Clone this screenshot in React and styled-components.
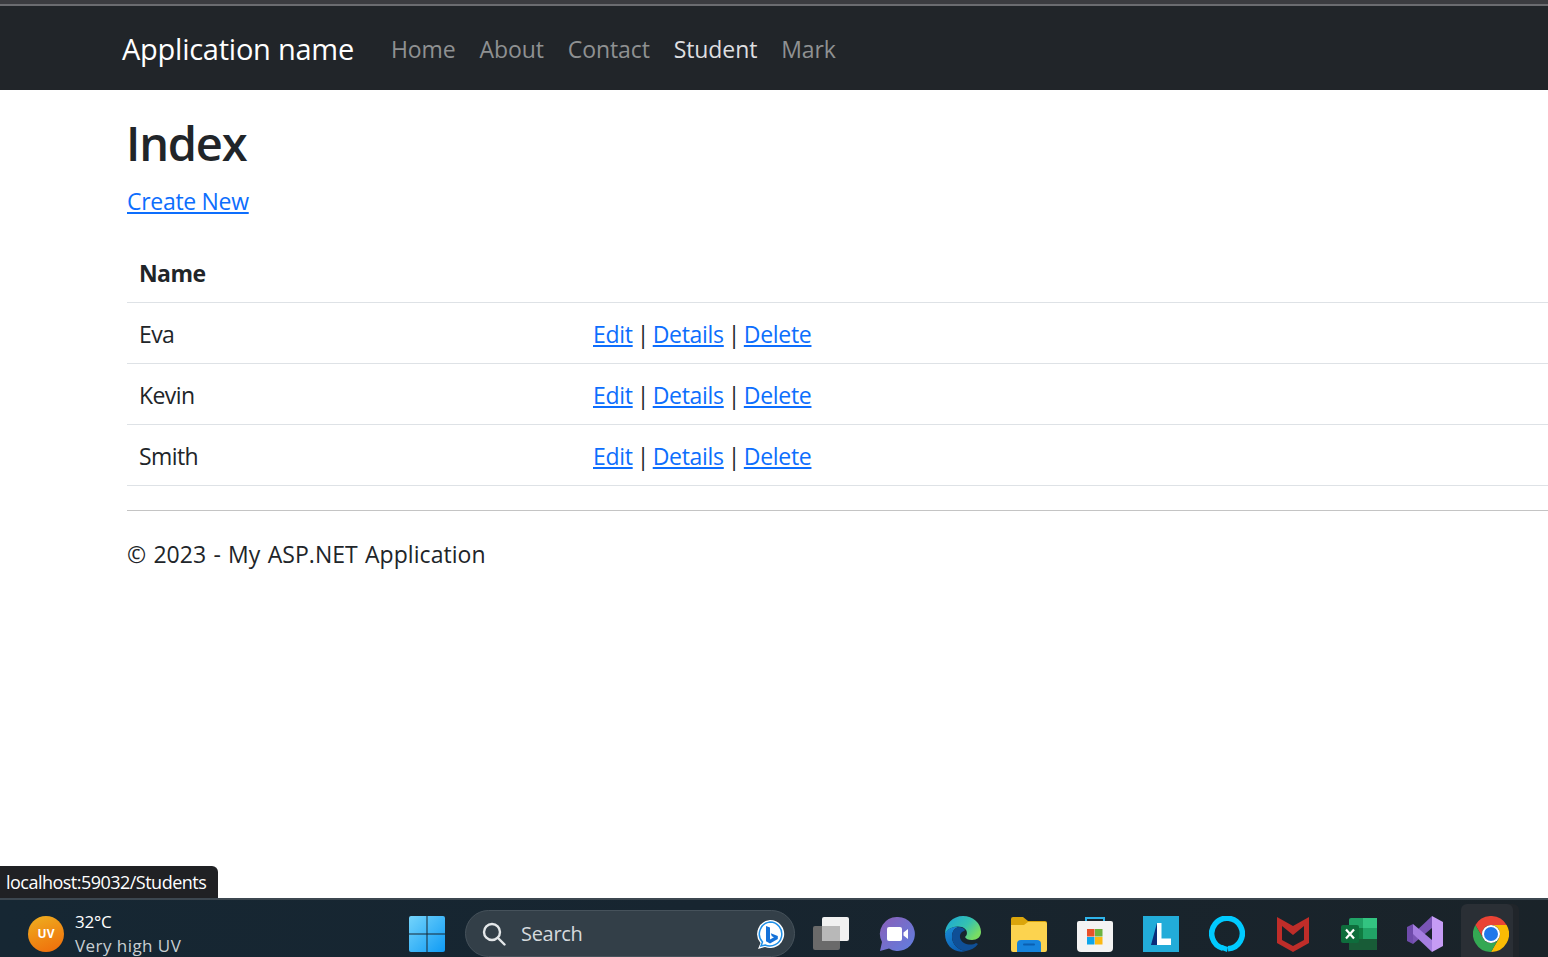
import React from 'react'
import styled, { createGlobalStyle } from 'styled-components'

const GlobalStyle = createGlobalStyle`
  html, body { margin: 0; padding: 0; background: #fff; }
  body { font-family: "Open Sans", "Liberation Sans", sans-serif; color: #212529; }
`

const Page = styled.div`
  position: relative;
  width: 1548px;
  height: 957px;
  overflow: hidden;
  display: flex;
  flex-direction: column;
`

const BrowserEdge = styled.div`
  height: 4px;
  background: #3b3c40;
  border-bottom: 2px solid #6b6c70;
`

const Navbar = styled.nav`
  height: 84px;
  box-sizing: border-box;
  padding: 1px 0 0 122px;
  background: #212529;
  display: flex;
  align-items: center;
`

const Brand = styled.a`
  font-size: 29px;
  letter-spacing: -0.25px;
  color: #fff;
  margin-right: 37px;
`

const NavLinks = styled.div`
  display: flex;
  gap: 24px;
`

const NavLink = styled.a`
  font-size: 23px;
  letter-spacing: -0.1px;
  color: ${props => props.$active ? '#dedfe0' : '#8f9192'};
`

const Main = styled.main`
  flex: 1;
  padding-left: 127px;
`

const Title = styled.h1`
  margin: 21px 0 0 -1px;
  font-size: 47px;
  line-height: 64px;
  font-weight: 600;
  letter-spacing: -1.2px;
`

const TextLink = styled.a`
  font-size: 23px;
  letter-spacing: -0.3px;
  color: #0d6efd;
  text-decoration: underline;
`

const CreateRow = styled.p`
  margin: 8px 0 0;
  line-height: 36px;
  letter-spacing: -0.2px;
`

const Table = styled.div`
  margin-top: 20px;
  width: 1500px;
`

const Row = styled.div`
  display: grid;
  grid-template-columns: 454px 1fr;
  height: 61px;
  box-sizing: border-box;
  padding: 2px 0 0 12px;
  border-bottom: 1px solid #dee2e6;
  align-items: center;
  font-size: 23px;
  letter-spacing: -0.6px;
`

const NameHead = styled.span`
  font-weight: 700;
`

const Actions = styled.span`
  display: flex;
  gap: 4px;
`

const Rule = styled.hr`
  margin: 24px 0 0;
  width: 1500px;
  border: 0;
  border-top: 1px solid #c4c4c4;
`

const Footer = styled.p`
  margin: 25px 0 0;
  font-size: 23px;
  line-height: 36px;
  letter-spacing: 0.05px;
  word-spacing: 1.2px;
`

const StatusBubble = styled.div`
  position: absolute;
  left: 0;
  bottom: 59px;
  width: 218px;
  height: 32px;
  box-sizing: border-box;
  padding-left: 6px;
  background: #202124;
  border-top-right-radius: 6px;
  color: #fff;
  font-size: 18px;
  letter-spacing: -0.52px;
  line-height: 33px;
`

const Taskbar = styled.footer`
  height: 59px;
  box-sizing: border-box;
  padding-top: 10px;
  border-top: 2px solid #3c4750;
  background: linear-gradient(90deg, #162733 0%, #172530 45%, #1a2329 100%);
  display: flex;
  align-items: center;
`

const Weather = styled.div`
  width: 394px;
  flex: none;
  display: flex;
  align-items: center;
  padding-left: 28px;
  box-sizing: border-box;
  gap: 11px;
`

const UvBadge = styled.div`
  width: 36px;
  height: 36px;
  border-radius: 50%;
  background: linear-gradient(160deg, #eeb020, #f06a0a);
  color: #fff;
  font: 700 12px "Open Sans", sans-serif;
  display: flex;
  align-items: center;
  justify-content: center;
`

const WeatherText = styled.div`
  font-size: 17px;
  letter-spacing: -0.2px;
  line-height: 24px;
  color: #fff;
`

const WeatherSub = styled.div`
  color: #c9cfd3;
  letter-spacing: 0.45px;
`

const IconCell = styled.div`
  width: 66px;
  height: 36px;
  flex: none;
  display: flex;
  justify-content: center;
  align-items: center;
`

const ActiveCell = styled(IconCell)`
  position: relative;
  &::before {
    content: '';
    position: absolute;
    top: -12px;
    left: 3px;
    width: 52px;
    height: 60px;
    border-radius: 6px 6px 0 0;
    background: #2a2f35;
    box-shadow: 6px 0 0 #20252a;
  }
  & > svg { position: relative; }
`

const SearchBox = styled.div`
  width: 330px;
  height: 47px;
  margin: 0 3px 0 5px;
  flex: none;
  box-sizing: border-box;
  border: 1px solid #46525b;
  border-radius: 24px;
  background: #333f48;
  display: flex;
  align-items: center;
  padding: 0 8px 0 16px;
  gap: 15px;
  color: #d6dadd;
  font-size: 20px;
  letter-spacing: -0.3px;
`

const SearchLabel = styled.span`
  flex: 1;
`

const Icon = ({ children, size = 36 }) => (
  <svg width={size} height={size} viewBox="0 0 36 36">{children}</svg>
)

const WindowsIcon = () => (
  <Icon>
    <defs>
      <linearGradient id="win" x1="0" y1="0" x2="1" y2="1">
        <stop offset="0" stopColor="#74d4fb" />
        <stop offset="1" stopColor="#0f9bf5" />
      </linearGradient>
    </defs>
    <path fill="url(#win)" d="M2 0h15.500v17.500H0V2a2 2 0 0 1 2-2zM18.500 0H34a2 2 0 0 1 2 2v15.500H18.500zM0 18.500h17.500V36H2a2 2 0 0 1-2-2zM18.500 18.500H36V34a2 2 0 0 1-2 2H18.500z" />
  </Icon>
)

const SearchGlass = () => (
  <svg width="24" height="24" viewBox="0 0 24 24" fill="none" stroke="#e4e7e9" strokeWidth="2.400">
    <circle cx="10" cy="10" r="8" />
    <path d="M16 16l6.500 6.500" strokeLinecap="round" />
  </svg>
)

const BingIcon = () => (
  <svg width="32" height="32" viewBox="0 0 32 32">
    <path fill="#fff" d="M16 2a14 14 0 1 1-5 27l-7 2 2.500-6A14 14 0 0 1 16 2z" />
    <path fill="none" stroke="#1d8fe8" strokeWidth="1.500" d="M16 4a12 12 0 1 1-5 23l-4 1 1.500-4A12 12 0 0 1 16 4z" />
    <path fill="#1572d9" d="M12 8l4 1.500v12l4-2.200-2.200-1-1-3 7 2.700v3l-7.800 4.500-4-2.200z" />
  </svg>
)

const TaskViewIcon = () => (
  <Icon>
    <rect x="0" y="10" width="27" height="24" rx="2" fill="#6a6a6a" />
    <rect x="9" y="1" width="27" height="24" rx="2" fill="#f1f1f1" />
    <rect x="9" y="10" width="18" height="15" fill="#b8b8b8" />
  </Icon>
)

const MeetIcon = () => (
  <Icon>
    <defs>
      <linearGradient id="meet" x1="0" y1="0" x2="1" y2="1">
        <stop offset="0" stopColor="#8a5fb8" />
        <stop offset="1" stopColor="#5f7fe0" />
      </linearGradient>
    </defs>
    <path fill="url(#meet)" d="M19 1a17 17 0 1 1-9 31.500L1 35l2-9A17 17 0 0 1 19 1z" />
    <rect x="8" y="11" width="15" height="14" rx="2" fill="#fff" />
    <path fill="#fff" d="M24.500 16.500l4.500-3.500v10l-4.500-3.500z" />
  </Icon>
)

const EdgeIcon = () => (
  <Icon>
    <defs>
      <linearGradient id="edgeTop" x1="0" y1="0" x2="1" y2="0.6">
        <stop offset="0" stopColor="#1aa5d8" />
        <stop offset="0.6" stopColor="#35c2b0" />
        <stop offset="1" stopColor="#79dc62" />
      </linearGradient>
      <linearGradient id="edgeLow" x1="0" y1="0" x2="0.6" y2="1">
        <stop offset="0" stopColor="#1a8ed8" />
        <stop offset="1" stopColor="#0c5cb0" />
      </linearGradient>
    </defs>
    <path fill="url(#edgeTop)" d="M18 0c10 0 18 7 18 16 0 5-4 8-9 8-4 0-6-1-7-3 3-2 3-8-3-10C10 9 3 12 0 18 0 8 8 0 18 0z" />
    <path fill="url(#edgeLow)" d="M0 18c2-5 8-8 14-7-5 1-7 5-7 10 0 7 6 13 14 14C10 38 0 30 0 18z" />
    <path fill="#0f4f96" d="M14 11c-5 1-7 5-7 10 0 7 6 13 14 14 5-1 9-3 12-7l-2-1c-3 2-8 2-12 0-5-3-5-9-2-11 1-1 3-1 3-2-1-2-4-3-6-3z" />
  </Icon>
)

const FolderIcon = () => (
  <Icon>
    <path fill="#dba50b" d="M0 3a2 2 0 0 1 2-2h10l5 4h17a2 2 0 0 1 2 2v4H0z" />
    <path fill="#fcd34f" d="M0 9h13l4-3h17a2 2 0 0 1 2 2v26a2 2 0 0 1-2 2H2a2 2 0 0 1-2-2z" />
    <path fill="#1683dc" d="M6 36v-8a4 4 0 0 1 4-4h16a4 4 0 0 1 4 4v8z" />
    <rect x="12" y="27.500" width="12" height="2" rx="1" fill="#0a5fb0" />
  </Icon>
)

const StoreIcon = () => (
  <Icon>
    <path fill="none" stroke="#2fb4ea" strokeWidth="2" d="M9 6V2h18v4" />
    <path fill="#f3f3f3" d="M0 7a2 2 0 0 1 2-2h32a2 2 0 0 1 2 2v25a4 4 0 0 1-4 4H4a4 4 0 0 1-4-4z" />
    <rect x="10" y="13" width="7.500" height="7.500" fill="#e8512a" />
    <rect x="18" y="13" width="7.500" height="7.500" fill="#6cb33f" />
    <rect x="10" y="21" width="7.500" height="7.500" fill="#0ea5ea" />
    <rect x="18" y="21" width="7.500" height="7.500" fill="#fbb812" />
  </Icon>
)

const LIcon = () => (
  <Icon>
    <rect width="36" height="36" fill="#22acd9" />
    <path fill="#0b2d7a" d="M14 7L8 29h6z" />
    <path fill="#fff" d="M14 7h4.500v15.500H28V29H14z" />
  </Icon>
)

const RingIcon = () => (
  <Icon>
    <path fill="none" stroke="#00caff" strokeWidth="5.500" d="M14 32.300a15.300 15.300 0 1 1 5 0.500" />
    <path fill="#00caff" d="M13 29l6 2-1 5-5-2z" />
  </Icon>
)

const ShieldIcon = () => (
  <Icon>
    <path fill="#bf2d29" d="M2 1l16 9 16-9v26l-16 9-16-9z" />
    <path fill="#1b2229" d="M7 10l11 9 11-9v14l-11 6-11-6z" />
  </Icon>
)

const ExcelIcon = () => (
  <Icon>
    <rect x="8" y="2" width="28" height="32" rx="2" fill="#21a366" />
    <rect x="22" y="2" width="14" height="10" fill="#33c481" />
    <rect x="8" y="12" width="14" height="11" fill="#107c41" />
    <rect x="8" y="23" width="28" height="11" fill="#185c37" />
    <rect x="0" y="9" width="18" height="18" rx="2" fill="#0e6d3c" />
    <path fill="none" stroke="#fff" strokeWidth="2.200" d="M5 13.500l8 9M13 13.500l-8 9" />
  </Icon>
)

const VsIcon = () => (
  <Icon>
    <path fill="#6f4bab" d="M0 11l6-3v20l-6-3z" />
    <path fill="#7a55b5" d="M25 0L6 18v10l19-16z" />
    <path fill="#a57ee0" d="M25 36L6 18V8l19 16z" />
    <path fill="#c69cf5" d="M25 0l11 6v24l-11 6z" />
  </Icon>
)

const ChromeIcon = () => {
  const sector = 'M2.400 9A18 18 0 0 1 33.600 9H18a9 9 0 0 0-7.800 13.500z'
  return (
    <Icon>
      <path fill="#ea4335" d={sector} />
      <path fill="#fbbc04" d={sector} transform="rotate(120 18 18)" />
      <path fill="#34a853" d={sector} transform="rotate(240 18 18)" />
      <circle cx="18" cy="18" r="9" fill="#fff" />
      <circle cx="18" cy="18" r="7" fill="#1f77ea" />
    </Icon>
  )
}

const students = ['Eva', 'Kevin', 'Smith']
const navItems = ['Home', 'About', 'Contact', 'Student', 'Mark']
const pinned = [MeetIcon, EdgeIcon, FolderIcon, StoreIcon, LIcon, RingIcon, ShieldIcon, ExcelIcon, VsIcon]

export default function App() {
  return (
    <Page>
      <GlobalStyle />
      <BrowserEdge />
      <Navbar>
        <Brand>Application name</Brand>
        <NavLinks>
          {navItems.map(item => (
            <NavLink key={item} $active={item === 'Student'}>{item}</NavLink>
          ))}
        </NavLinks>
      </Navbar>
      <Main>
        <Title>Index</Title>
        <CreateRow><TextLink>Create New</TextLink></CreateRow>
        <Table>
          <Row><NameHead>Name</NameHead></Row>
          {students.map(name => (
            <Row key={name}>
              <span>{name}</span>
              <Actions>
                <TextLink>Edit</TextLink>|<TextLink>Details</TextLink>|<TextLink>Delete</TextLink>
              </Actions>
            </Row>
          ))}
        </Table>
        <Rule />
        <Footer>© 2023 - My ASP.NET Application</Footer>
      </Main>
      <StatusBubble>localhost:59032/Students</StatusBubble>
      <Taskbar>
        <Weather>
          <UvBadge>UV</UvBadge>
          <WeatherText>
            32°C
            <WeatherSub>Very high UV</WeatherSub>
          </WeatherText>
        </Weather>
        <IconCell><WindowsIcon /></IconCell>
        <SearchBox>
          <SearchGlass />
          <SearchLabel>Search</SearchLabel>
          <BingIcon />
        </SearchBox>
        <IconCell><TaskViewIcon /></IconCell>
        {pinned.map((Item, i) => (
          <IconCell key={i}><Item /></IconCell>
        ))}
        <ActiveCell><ChromeIcon /></ActiveCell>
      </Taskbar>
    </Page>
  )
}
